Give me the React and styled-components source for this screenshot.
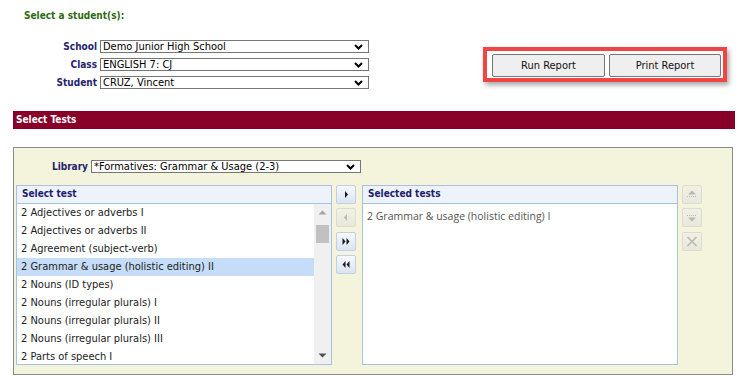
import React from 'react';
import styled, { createGlobalStyle } from 'styled-components';

const uiFont = `"DejaVu Sans Condensed", "DejaVu Sans", Verdana, sans-serif`;

const GlobalStyle = createGlobalStyle`
  html, body { margin: 0; padding: 0; background: #fff; }
  body { font-family: ${uiFont}; font-size: 11px; color: #000; }
  * { box-sizing: border-box; }
`;

const Page = styled.div`
  width: 742px;
  height: 390px;
  overflow: hidden;
  padding: 0 7px 0 13px;
`;

const Top = styled.div`
  display: flex;
  align-items: flex-start;
`;

const StudentCol = styled.div`
  display: flex;
  flex-direction: column;
`;

const Heading = styled.div`
  margin: 9px 0 0 11px;
  font-weight: bold;
  font-size: 10px;
  color: #2f6a14;
  line-height: 13px;
`;

const FieldGrid = styled.div`
  display: grid;
  grid-template-columns: ${(p) => p.$labelWidth}px ${(p) => p.$fieldWidth}px;
  column-gap: 3px;
  row-gap: 5px;
  grid-auto-rows: 13px;
  margin-top: ${(p) => p.$top}px;
`;

const FieldLabel = styled.div`
  text-align: right;
  font-weight: bold;
  font-size: 10px;
  color: #24246e;
  line-height: 13px;
`;

const SelectBox = styled.div`
  display: flex;
  align-items: center;
  height: 13px;
  border: 1px solid #767676;
  background: #fff;
  padding: 0 5px 0 2px;
  line-height: 11px;
  color: #000;
`;

const SelectText = styled.span`
  flex: 1;
  white-space: nowrap;
  overflow: hidden;
`;

const ReportFrame = styled.div`
  margin: 47px 0 0 114px;
  display: flex;
  gap: 4px;
  padding: 3px 2px 1px 5px;
  border: 4px solid #f04545;
  box-shadow: 2px 3px 5px rgba(0, 0, 0, 0.35);
`;

const ReportButton = styled.button`
  width: ${(p) => p.$w}px;
  height: 23px;
  padding: 0;
  background: #efefef;
  border: 1px solid #767676;
  border-radius: 2px;
  font-family: ${uiFont};
  font-size: 11px;
  color: #111;
`;

const SectionBar = styled.div`
  margin-top: 22px;
  height: 18px;
  line-height: 18px;
  padding-left: 3px;
  background: #880029;
  color: #fff;
  font-weight: bold;
  font-size: 10px;
`;

const Panel = styled.div`
  margin: 18px 2px 0 0;
  border: 1px solid #8a8a8a;
  background: #f4f4dc;
  padding: 12px 0 9px 2px;
`;

const ListsRow = styled.div`
  display: flex;
  align-items: flex-start;
  margin-top: 12px;
`;

const ListBox = styled.div`
  width: 316px;
  height: 180px;
  border: 1px solid #a9c0de;
  background: #fff;
  display: flex;
  flex-direction: column;
  margin-left: ${(p) => p.$ml || 0}px;
`;

const ListHeader = styled.div`
  height: 18px;
  flex: none;
  line-height: 16px;
  padding-left: 5px;
  border-bottom: 1px solid #a9c0de;
  background: #eef3fb;
  color: #1c1c6c;
  font-weight: bold;
  font-size: 10px;
`;

const ListBody = styled.div`
  flex: 1;
  display: flex;
  overflow: hidden;
`;

const Items = styled.div`
  flex: 1;
  overflow: hidden;
  padding-top: ${(p) => p.$pt || 0}px;
`;

const Item = styled.div`
  height: 18px;
  line-height: 17px;
  padding-left: 4px;
  white-space: nowrap;
  color: #222;
  background: ${(p) => (p.$selected ? '#c5ddf8' : 'transparent')};
`;

const PickedItem = styled.div`
  height: 18px;
  line-height: 18px;
  padding-left: 4px;
  white-space: nowrap;
  font-family: "Open Sans", "Noto Sans", sans-serif;
  font-size: 10.5px;
  color: #555;
`;

const Scrollbar = styled.div`
  width: 17px;
  flex: none;
  background: #f0f0f0;
  display: flex;
  flex-direction: column;
  align-items: center;
`;

const ScrollArrow = styled.div`
  width: 17px;
  height: 17px;
  flex: none;
  display: flex;
  align-items: center;
  justify-content: center;
  margin-top: ${(p) => (p.$bottom ? 'auto' : '0')};
`;

const Thumb = styled.div`
  width: 13px;
  height: 18px;
  margin-top: 4px;
  background: #c1c1c1;
`;

const ButtonCol = styled.div`
  display: flex;
  flex-direction: column;
  gap: 4.3px;
  margin-left: 4px;
`;

const MoveButton = styled.div`
  width: 20px;
  height: 19px;
  border: 1px solid ${(p) => (p.$disabled ? '#dcdccf' : '#c2d0e5')};
  border-radius: 2px;
  background: ${(p) =>
    p.$disabled
      ? 'linear-gradient(#f0f0e4, #e8e8dc)'
      : 'linear-gradient(#f6f9fd, #dae4f2)'};
  display: flex;
  align-items: center;
  justify-content: center;
`;

const Chevron = () => (
  <svg width="9" height="6" viewBox="0 0 9 6">
    <polyline points="1,1 4.5,4.5 8,1" fill="none" stroke="#000" strokeWidth="2" />
  </svg>
);

const Select = ({ children }) => (
  <SelectBox>
    <SelectText>{children}</SelectText>
    <Chevron />
  </SelectBox>
);

const Icon = ({ kind, color }) => {
  const c = color;
  switch (kind) {
    case 'right':
      return (
        <svg width="18" height="17" viewBox="0 0 18 17">
          <polygon points="8,5 11,8.5 8,12" fill={c} />
        </svg>
      );
    case 'left':
      return (
        <svg width="18" height="17" viewBox="0 0 18 17">
          <polygon points="10,5 7,8.5 10,12" fill={c} />
        </svg>
      );
    case 'rr':
      return (
        <svg width="18" height="17" viewBox="0 0 18 17">
          <polygon points="5.5,5 8.5,8.5 5.5,12" fill={c} />
          <polygon points="9.5,5 12.5,8.5 9.5,12" fill={c} />
        </svg>
      );
    case 'll':
      return (
        <svg width="18" height="17" viewBox="0 0 18 17">
          <polygon points="8.5,5 5.5,8.5 8.5,12" fill={c} />
          <polygon points="12.5,5 9.5,8.5 12.5,12" fill={c} />
        </svg>
      );
    case 'up':
      return (
        <svg width="18" height="17" viewBox="0 0 18 17">
          <polygon points="5,8.5 9,4.5 13,8.5" fill={c} />
          <line x1="4" y1="10.5" x2="14" y2="10.5" stroke={c} strokeWidth="1" strokeDasharray="1 1" />
        </svg>
      );
    case 'down':
      return (
        <svg width="18" height="17" viewBox="0 0 18 17">
          <line x1="4" y1="6.5" x2="14" y2="6.5" stroke={c} strokeWidth="1" strokeDasharray="1 1" />
          <polygon points="5,8.5 13,8.5 9,12.5" fill={c} />
        </svg>
      );
    case 'x':
      return (
        <svg width="18" height="17" viewBox="0 0 18 17">
          <line x1="4.5" y1="4" x2="13.5" y2="13" stroke={c} strokeWidth="1.6" />
          <line x1="13.5" y1="4" x2="4.5" y2="13" stroke={c} strokeWidth="1.6" />
        </svg>
      );
    default:
      return null;
  }
};

const ScrollTri = ({ up, color }) => (
  <svg width="9" height="5" viewBox="0 0 9 5">
    <polygon points={up ? '0.5,4.5 4.5,0.5 8.5,4.5' : '0.5,0.5 8.5,0.5 4.5,4.5'} fill={color} />
  </svg>
);

const tests = [
  '2 Adjectives or adverbs I',
  '2 Adjectives or adverbs II',
  '2 Agreement (subject-verb)',
  '2 Grammar & usage (holistic editing) II',
  '2 Nouns (ID types)',
  '2 Nouns (irregular plurals) I',
  '2 Nouns (irregular plurals) II',
  '2 Nouns (irregular plurals) III',
  '2 Parts of speech I',
];

export default function App() {
  return (
    <>
      <GlobalStyle />
      <Page>
        <Top>
          <StudentCol>
            <Heading>Select a student(s):</Heading>
            <FieldGrid $labelWidth={84} $fieldWidth={269} $top={18}>
              <FieldLabel>School</FieldLabel>
              <Select>Demo Junior High School</Select>
              <FieldLabel>Class</FieldLabel>
              <Select>ENGLISH 7: CJ</Select>
              <FieldLabel>Student</FieldLabel>
              <Select>CRUZ, Vincent</Select>
            </FieldGrid>
          </StudentCol>
          <ReportFrame>
            <ReportButton $w={113}>Run Report</ReportButton>
            <ReportButton $w={112}>Print Report</ReportButton>
          </ReportFrame>
        </Top>

        <SectionBar>Select Tests</SectionBar>

        <Panel>
          <FieldGrid $labelWidth={72} $fieldWidth={270} $top={0}>
            <FieldLabel>Library</FieldLabel>
            <Select>*Formatives: Grammar &amp; Usage (2-3)</Select>
          </FieldGrid>

          <ListsRow>
            <ListBox>
              <ListHeader>Select test</ListHeader>
              <ListBody>
                <Items>
                  {tests.map((t, i) => (
                    <Item key={t} $selected={i === 3}>
                      {t}
                    </Item>
                  ))}
                </Items>
                <Scrollbar>
                  <ScrollArrow>
                    <ScrollTri up color="#a3a3a3" />
                  </ScrollArrow>
                  <Thumb />
                  <ScrollArrow $bottom>
                    <ScrollTri color="#505050" />
                  </ScrollArrow>
                </Scrollbar>
              </ListBody>
            </ListBox>

            <ButtonCol>
              <MoveButton><Icon kind="right" color="#1a1a1a" /></MoveButton>
              <MoveButton $disabled><Icon kind="left" color="#b9b9b0" /></MoveButton>
              <MoveButton><Icon kind="rr" color="#1a1a1a" /></MoveButton>
              <MoveButton><Icon kind="ll" color="#1a1a1a" /></MoveButton>
            </ButtonCol>

            <ListBox $ml={6}>
              <ListHeader>Selected tests</ListHeader>
              <ListBody>
                <Items $pt={3}>
                  <PickedItem>2 Grammar &amp; usage (holistic editing) I</PickedItem>
                </Items>
              </ListBody>
            </ListBox>

            <ButtonCol>
              <MoveButton $disabled><Icon kind="up" color="#b9b9b0" /></MoveButton>
              <MoveButton $disabled><Icon kind="down" color="#b9b9b0" /></MoveButton>
              <MoveButton $disabled><Icon kind="x" color="#b9b9b0" /></MoveButton>
            </ButtonCol>
          </ListsRow>
        </Panel>
      </Page>
    </>
  );
}
